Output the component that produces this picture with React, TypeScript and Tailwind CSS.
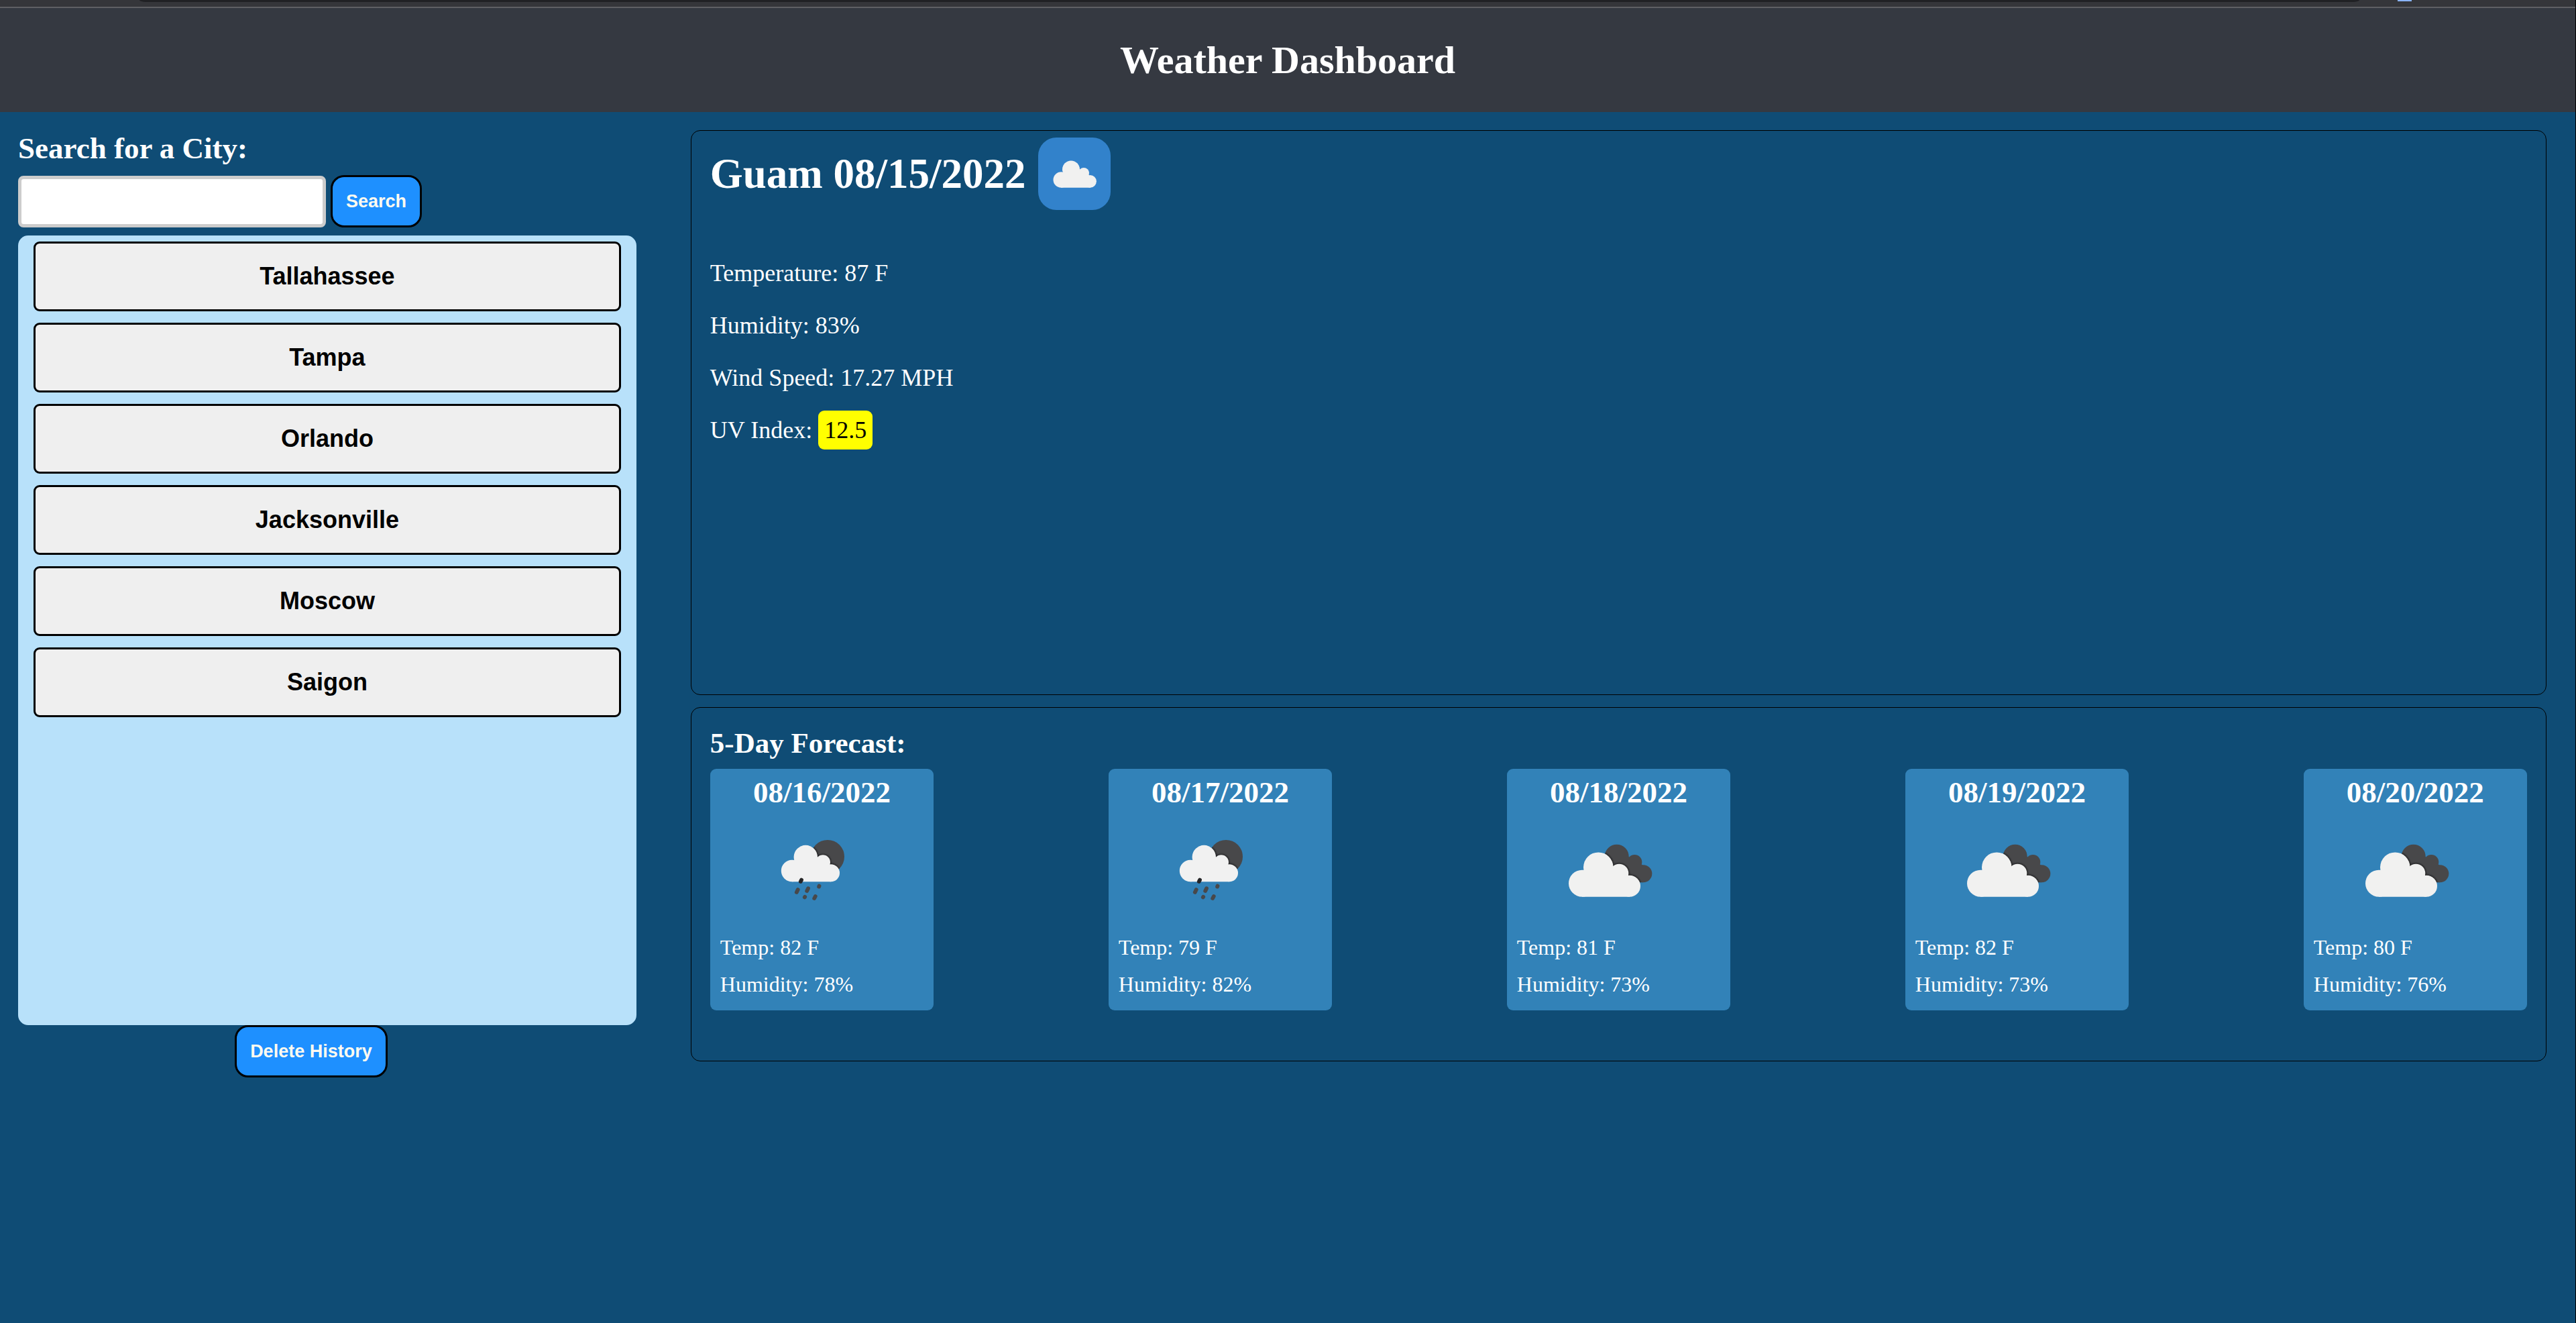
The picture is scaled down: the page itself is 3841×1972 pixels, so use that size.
import React, { useState } from "react";

type Sky = "rain" | "clouds";

interface Day {
  date: string;
  sky: Sky;
  temp: number;
  humidity: number;
}

const initialCities = ["Tallahassee", "Tampa", "Orlando", "Jacksonville", "Moscow", "Saigon"];

const days: Day[] = [
  { date: "08/16/2022", sky: "rain", temp: 82, humidity: 78 },
  { date: "08/17/2022", sky: "rain", temp: 79, humidity: 82 },
  { date: "08/18/2022", sky: "clouds", temp: 81, humidity: 73 },
  { date: "08/19/2022", sky: "clouds", temp: 82, humidity: 73 },
  { date: "08/20/2022", sky: "clouds", temp: 80, humidity: 76 },
];

const actionButton =
  "h-[78px] rounded-[20px] border-[3px] border-black bg-[#1e90ff] px-5 font-['Liberation_Sans',Arial,sans-serif] text-[27px] font-bold text-[#fffaf0]";

function SingleCloudIcon() {
  return (
    <svg viewBox="0 0 108 108" className="size-[108px] rounded-[27px] bg-[#3282cb]" role="img" aria-label="Cloudy">
      <g fill="#f1f1f0">
        <circle cx="34.3" cy="63" r="11.8" />
        <circle cx="49" cy="47.5" r="13" />
        <circle cx="68" cy="53" r="8" />
        <circle cx="77.5" cy="65.3" r="9.4" />
        <path d="M34 74.7V55L40 51H62L69 50L76 56L78 74.7Z" />
      </g>
    </svg>
  );
}

function CloudsIcon({ id }: { id: string }) {
  const front = (
    <>
      <circle cx="33" cy="94.7" r="20" />
      <circle cx="57.3" cy="70.7" r="22.3" />
      <circle cx="88.3" cy="79.7" r="14" />
      <circle cx="104" cy="98.7" r="16" />
      <path d="M33 114.7V75L78 72L90 78L102 83L104 114.7Z" />
    </>
  );
  const back = (
    <>
      <circle cx="84.7" cy="54.7" r="18" />
      <circle cx="111.3" cy="63" r="11" />
      <circle cx="124.3" cy="80.3" r="13" />
      <path d="M70 55H102L112 60L124 68V93.3H80Z" />
    </>
  );
  return (
    <svg viewBox="0 0 150 150" className="ml-16 size-[150px]" role="img" aria-label="Broken clouds">
      <defs>
        <clipPath id={`${id}-back`}>{back}</clipPath>
        <filter id={`${id}-soft`} x="-20%" y="-20%" width="140%" height="140%">
          <feGaussianBlur stdDeviation="1.3" />
        </filter>
      </defs>
      <g fill="#48484a">{back}</g>
      <g clipPath={`url(#${id}-back)`}>
        <g fill="#1c1c1e" stroke="#1c1c1e" strokeWidth="2" filter={`url(#${id}-soft)`}>
          {front}
        </g>
      </g>
      <g fill="#f1f1f0">{front}</g>
    </svg>
  );
}

function NightRainIcon({ id }: { id: string }) {
  const cloud = (
    <>
      <circle cx="43" cy="76" r="16.2" />
      <circle cx="63.3" cy="55.5" r="17.7" />
      <circle cx="89" cy="63.3" r="11" />
      <circle cx="101" cy="79.3" r="13" />
      <path d="M43 92.3V61L80 56L90 62L99 67L101 92.3Z" />
    </>
  );
  return (
    <svg viewBox="0 0 150 150" className="ml-16 size-[150px]" role="img" aria-label="Rain at night">
      <defs>
        <clipPath id={`${id}-moon`}>
          <circle cx="96" cy="54.9" r="25" />
        </clipPath>
        <filter id={`${id}-soft`} x="-20%" y="-20%" width="140%" height="140%">
          <feGaussianBlur stdDeviation="1.3" />
        </filter>
      </defs>
      <circle cx="96" cy="54.9" r="25" fill="#48484a" />
      <g clipPath={`url(#${id}-moon)`}>
        <g fill="#1c1c1e" stroke="#1c1c1e" strokeWidth="2" filter={`url(#${id}-soft)`}>
          {cloud}
        </g>
      </g>
      <g fill="#f1f1f1">{cloud}</g>
      <g stroke="#48484a" strokeWidth="5.8" strokeLinecap="round">
        <path d="M57 89.6L55.8 92" stroke="#242426" />
        <path d="M51.7 104L49.8 108" />
        <path d="M67 102.2L65.2 106" />
        <path d="M83.5 98.6L83.1 99.6" />
        <path d="M62.2 114.8L61.8 115.4" />
        <path d="M77.8 114L76.2 117" />
      </g>
    </svg>
  );
}

function ForecastCard({ day }: { day: Day }) {
  const id = `sky-${day.date.replace(/\//g, "")}`;
  return (
    <article className="w-[12.3%] rounded-[9px] bg-[#3282b8] px-[15px] pt-2 pb-[11px]">
      <h3 className="mb-[14px] text-center text-[45px] leading-[54px] font-bold">{day.date}</h3>
      {day.sky === "rain" ? <NightRainIcon id={id} /> : <CloudsIcon id={id} />}
      <div className="mt-[13px] text-[32px] leading-[55px] whitespace-nowrap">
        <p>Temp: {day.temp} F</p>
        <p>Humidity: {day.humidity}%</p>
      </div>
    </article>
  );
}

function BrowserEdge() {
  return (
    <div className="flex h-3 items-start border-b-2 border-[#5f6064] bg-[#35363a] pr-[244px] pl-[208px]">
      <div className="h-[3px] flex-1 bg-[#202124] [border-radius:0_0_10px_10px/0_0_3px_3px]" />
      <div className="ml-[57px] h-[2px] w-[21px] bg-[#8ab4f8]" />
    </div>
  );
}

export default function App() {
  const [cities, setCities] = useState(initialCities);
  const [query, setQuery] = useState("");

  const addCity = (event: React.FormEvent) => {
    event.preventDefault();
    const name = query.trim();
    if (name) {
      setCities([...cities, name]);
      setQuery("");
    }
  };

  return (
    <div className="min-h-screen border-r border-black bg-[#0f4c75] font-['Liberation_Serif','Times_New_Roman',serif] text-white">
      <BrowserEdge />
      <header className="bg-[#353941] py-10 text-center">
        <h1 className="text-[58px] leading-[75px] font-bold">Weather Dashboard</h1>
      </header>
      <div className="flex items-start gap-[81px] py-[27px] pr-[43px] pl-[27px]">
        <aside className="w-[24vw] shrink-0">
          <form onSubmit={addCity}>
            <label htmlFor="city" className="block text-[45px] leading-[54px] font-bold">
              Search for a City:
            </label>
            <div className="mt-[13px] mb-3 flex items-center gap-[7px]">
              <input
                id="city"
                type="text"
                value={query}
                onChange={(event) => setQuery(event.target.value)}
                className="h-[77px] w-[459px] rounded-[8px] border-[5px] border-[#cccccc] bg-white px-3 text-[32px] text-black"
              />
              <button type="submit" className={actionButton}>
                Search
              </button>
            </div>
          </form>
          <div className="flex min-h-[1177px] flex-col gap-[17px] rounded-[15px] bg-[#b8e1fa] px-[23px] py-[9px]">
            {cities.map((city) => (
              <button
                key={city}
                type="button"
                className="h-[104px] rounded-[9px] border-[3px] border-black bg-[#efefef] font-['Liberation_Sans',Arial,sans-serif] text-[36px] font-bold text-black"
              >
                {city}
              </button>
            ))}
          </div>
          <div className="flex justify-center pr-12">
            <button type="button" className={actionButton} onClick={() => setCities([])}>
              Delete History
            </button>
          </div>
        </aside>
        <main className="flex min-w-0 flex-1 flex-col gap-[18px]">
          <section className="min-h-[842px] rounded-[14px] border border-black px-7 pt-[10px] pb-7">
            <div className="flex items-center gap-[18px]">
              <h2 className="text-[63px] leading-[75px] font-bold">Guam 08/15/2022</h2>
              <SingleCloudIcon />
            </div>
            <div className="mt-[55px] text-[36px] leading-[78px]">
              <p>Temperature: 87 F</p>
              <p>Humidity: 83%</p>
              <p>Wind Speed: 17.27 MPH</p>
              <p>
                UV Index: <span className="rounded-[9px] bg-[#ffff00] p-[9px] text-black">12.5</span>
              </p>
            </div>
          </section>
          <section className="min-h-[528px] rounded-[14px] border border-black px-7 pt-[26px] pb-7">
            <h2 className="text-[43px] leading-[54px] font-bold">5-Day Forecast:</h2>
            <div className="mt-[11px] flex justify-between">
              {days.map((day) => (
                <ForecastCard key={day.date} day={day} />
              ))}
            </div>
          </section>
        </main>
      </div>
    </div>
  );
}
